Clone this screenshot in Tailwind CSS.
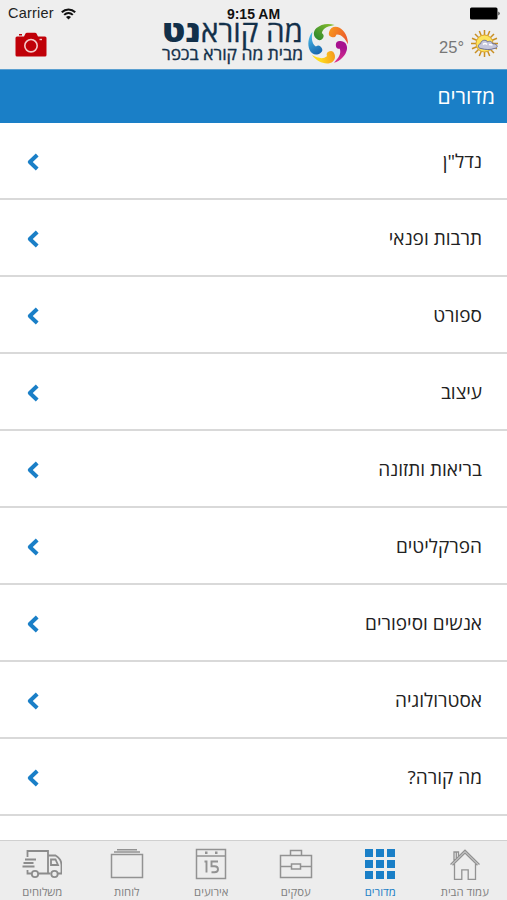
<!DOCTYPE html>
<html lang="he" dir="rtl">

<head>
    <meta charset="UTF-8">
    <meta name="viewport" content="width=device-width, initial-scale=1.0">
    <title>מה קוראנט - מדורים</title>
    <script src="https://cdn.jsdelivr.net/npm/@tailwindcss/browser@4"></script>
</head>

<body class="bg-white w-[507px] h-[900px] overflow-hidden flex flex-col font-['Open_Sans','Noto_Sans',sans-serif]">

    <!-- Status bar and logo -->
    <header dir="ltr" class="h-[69px] shrink-0 bg-[#eeeeee] grid grid-cols-[1fr_190px_1fr] font-['Liberation_Sans',sans-serif]">
        <div class="pl-2 pt-[5px]">
            <div class="flex items-center h-[17px] text-[14.5px] text-[#222] gap-[7px]">
                <span class="tracking-[.2px] pt-px">Carrier</span>
                <svg class="w-[15px] h-[12px]" viewBox="0 0 15 12" fill="none" stroke="#111" stroke-width="2">
                    <path d="M.8 4.3C4.6.5 10.4.5 14.2 4.3M3.2 6.9c2.5-2.4 6.1-2.4 8.6 0" />
                    <path d="M7.5 11.4 5 8.9c1.4-1.3 3.6-1.3 5 0z" fill="#111" stroke="none" />
                </svg>
            </div>
            <svg class="ml-[7px] mt-[10px] w-[32px] h-[26px]" viewBox="0 0 32 26">
                <path d="M2 4.5h7l1.5-3Q11 .8 12 .8h8q1 0 1.500.7l1.500 3h7q1.500 0 1.500 1.500v17q0 1.500-1.500 1.500H2Q.5 24.500.5 23V6Q.5 4.500 2 4.500zM4 2h3v1.500H4z" fill="#c00008" />
                <circle cx="16" cy="13.700" r="6.200" fill="none" stroke="#f6c9c9" stroke-width="1.600" />
                <path d="M24.500 7.500h2.500" stroke="#f6c9c9" stroke-width="1.400" />
            </svg>
        </div>

        <div class="pt-[5px] flex flex-col items-center">
            <div class="h-[17px] leading-[17px] pt-px text-[14px] font-bold text-[#111]">9:15 AM</div>
            <svg class="w-[190px] h-[47px] shrink-0 overflow-visible" viewBox="158 22 190 47">
                <g direction="rtl" fill="#12304a" font-family="Open Sans, Noto Sans, sans-serif">
                    <text x="302" y="42" font-size="29" stroke="#12304a" stroke-width=".3" textLength="102" lengthAdjust="spacingAndGlyphs">מה קורא</text>
                    <text x="200" y="42" font-size="29" font-weight="800" textLength="39" lengthAdjust="spacingAndGlyphs">נט</text>
                    <text x="302" y="59.700" font-size="17" stroke="#12304a" stroke-width=".35" textLength="141" lengthAdjust="spacingAndGlyphs">מבית מה קורא בכפר</text>
                </g>
                <defs>
                    <path id="swirl" d="M11.700 -4.200C17 -5 20.500-1 20 4C19.300 10 15 16 8 19C12 14 15 9 12.500 4A4.100 4.100 0 1 1 11.700-4.200z" />
                    <linearGradient id="green" x1="0" y1="0" x2="0" y2="1"><stop offset="0" stop-color="#2f8a2e" /><stop offset="1" stop-color="#8bbf2c" /></linearGradient>
                    <linearGradient id="orange" x1="0" y1="0" x2="0" y2="1"><stop offset="0" stop-color="#f7941d" /><stop offset="1" stop-color="#e9502f" /></linearGradient>
                    <linearGradient id="magenta" x1="0" y1="0" x2="0" y2="1"><stop offset=".3" stop-color="#a8128f" /><stop offset="1" stop-color="#e2368c" /></linearGradient>
                    <linearGradient id="yellow" x1="0" y1="0" x2="0" y2="1"><stop offset="0" stop-color="#f59a1c" /><stop offset=".7" stop-color="#ffdc1e" /></linearGradient>
                    <linearGradient id="blue" x1="0" y1="0" x2="0" y2="1"><stop offset="0" stop-color="#1766ae" /><stop offset="1" stop-color="#4cbdea" /></linearGradient>
                </defs>
                <g transform="translate(327.200 43.800) scale(.96)">
                    <use href="#swirl" fill="url(#magenta)" transform="rotate(6)" />
                    <use href="#swirl" fill="url(#yellow)" transform="rotate(78)" />
                    <use href="#swirl" fill="url(#blue)" transform="rotate(150)" />
                    <use href="#swirl" fill="url(#green)" transform="rotate(222)" />
                    <use href="#swirl" fill="url(#orange)" transform="rotate(294)" />
                </g>
            </svg>
        </div>

        <div class="flex flex-col items-end pt-[7px] pr-[6px]">
            <svg class="w-[31px] h-[13px]" viewBox="0 0 31 13">
                <rect x="0" y=".5" width="27.500" height="12" rx="1.500" fill="#000" />
                <path d="M28.500 4.500q2.200 2 0 4z" fill="#000" />
            </svg>
            <div class="flex items-center mt-[9px] gap-[6px] pr-[1px]">
                <span class="text-[16.5px] leading-[20px] pt-[5px] text-[#777]">25°</span>
                <svg class="w-[30px] h-[30px]" viewBox="0 0 30 30">
                    <path d="M14.500 1v27M1 14.500h27M5 5l19 19M24 5 5 24M9.300 2l10.400 25M19.700 2 9.300 27M2 9.300l25 10.400M2 19.700l25-10.400" stroke="#c98f22" stroke-width="1.500" />
                    <circle cx="14.500" cy="14.500" r="8.500" fill="#fde35a" stroke="#dca52d" />
                    <path d="M11 19.500c-3.500 0-3.500-4.500-.3-4.800.3-4 5.500-4.500 7-1.700 2.500-1.700 4.800 0 4.800 1.700 6 0 6 4.500 1.500 4.800-3 1.500-9 1.300-13 0z" fill="#c5c7dc" stroke="#6f7395" stroke-width="1" />
                    <path d="M13 15.500q2-2 4 0M19 15.500l3.500.5" stroke="#fff" stroke-width="1.500" fill="none" />
                </svg>
            </div>
        </div>
    </header>

    <!-- Page title -->
    <h1 class="h-[54px] shrink-0 bg-[#1a7fc7] border-t border-[#5a9fd0] px-3 pt-px flex items-center text-white text-[21px]">מדורים</h1>

    <!-- Sections list -->
    <ul id="sections" class="flex-1 min-h-0 overflow-hidden text-[19px] text-[#222]"></ul>

    <!-- Bottom tabs -->
    <nav class="h-[60px] shrink-0 bg-[#ededed] border-t border-[#d0d0d0] grid grid-cols-6 text-[11.3px] font-medium text-[#808080]">
        <a class="flex flex-col items-center pt-[6px]">
            <svg class="w-[34px] h-[34px]" viewBox="0 0 34 34" fill="none" stroke="#929292" stroke-width="1.300">
                <path d="M2.500 17.500 17 3.200l14.500 14.300M4.500 18.200 17 6l12.500 12.200M6.500 17v15.300h7.300v-9.500h6.400v9.500h7.300V17M6 13.500V5h4.500v4M8.300 11.500V5" />
            </svg>
            <span class="leading-[16px] mt-[3px]">עמוד הבית</span>
        </a>
        <a class="flex flex-col items-center pt-[6px] text-[#1a7fc7]">
            <svg class="w-[34px] h-[34px]" viewBox="0 0 34 34" fill="#1a7fc7">
                <path d="M2 2h8v8H2zM13 2h8v8h-8zM24 2h8v8h-8zM2 13h8v8H2zM13 13h8v8h-8zM24 13h8v8h-8zM2 24h8v8H2zM13 24h8v8h-8zM24 24h8v8h-8z" />
            </svg>
            <span class="leading-[16px] mt-[3px]">מדורים</span>
        </a>
        <a class="flex flex-col items-center pt-[6px]">
            <svg class="w-[34px] h-[34px]" viewBox="0 0 34 34" fill="none" stroke="#929292" stroke-width="1.500">
                <path d="M1.500 8.500h31v22h-31zM11.500 8.500v-5h11v5M1.500 19.500h11M21.500 19.500h11M12.500 17h9v5h-9z" />
            </svg>
            <span class="leading-[16px] mt-[3px]">עסקים</span>
        </a>
        <a class="flex flex-col items-center pt-[6px]">
            <svg class="w-[34px] h-[34px]" viewBox="0 0 34 34" fill="none" stroke="#929292" stroke-width="1.500">
                <path d="M2.500 2.500h29v29h-29zM2.500 9h29" />
                <path d="M11 5.800h2.500M21 5.800h2.500" stroke-width="2.500" />
                <path d="M10.500 14.500h2v11M24 14.500h-6.500v4.700h3q3.500 0 3.500 3t-3.500 3h-3" stroke-width="1.900" />
            </svg>
            <span class="leading-[16px] mt-[3px]">אירועים</span>
        </a>
        <a class="flex flex-col items-center pt-[6px]">
            <svg class="w-[34px] h-[34px]" viewBox="0 0 34 34" fill="none" stroke="#929292" stroke-width="1.500">
                <path d="M1.500 7.500h31v23h-31zM4 5h26M7 2.700h20" />
            </svg>
            <span class="leading-[16px] mt-[3px]">לוחות</span>
        </a>
        <a class="flex flex-col items-center pt-[6px]">
            <svg class="w-[40px] h-[34px]" viewBox="0 0 40 34" fill="none" stroke="#8c8c8c" stroke-width="1.800">
                <path d="M5.500 10V4h20.500v22.500H17M5.500 23v3.500H9M26 8.500h7.500q6 3.500 6 9.500v8.500H36M26 26.500h2.500M29 12.500h4.500l2.500 5.500h-7zM3 12.500h11M1.500 16h10M.5 19.500h12" />
                <circle cx="13" cy="27" r="3.200" />
                <circle cx="32.500" cy="27" r="3.200" />
            </svg>
            <span class="leading-[16px] mt-[3px]">משלוחים</span>
        </a>
    </nav>

    <script>
        const sections = ['נדל"ן', 'תרבות ופנאי', 'ספורט', 'עיצוב', 'בריאות ותזונה', 'הפרקליטים', 'אנשים וסיפורים', 'אסטרולוגיה', 'מה קורה?']

        //build one row per section, the arrow points left since the page is rtl
        document.getElementById('sections').innerHTML = sections.map((name) => `
            <li class="h-[77px] flex items-center justify-between pt-[2px] pr-[25px] pl-[26px] border-b-2 border-[#d9d9d9]">
                <span>${name}</span>
                <svg class="w-[14px] h-[20px]" viewBox="0 0 14 20" fill="none" stroke="#1a7fc7" stroke-width="4" stroke-linejoin="round">
                    <path d="M11.200 3 3.800 10l7.400 7" />
                </svg>
            </li>`).join('')
    </script>
</body>

</html>
